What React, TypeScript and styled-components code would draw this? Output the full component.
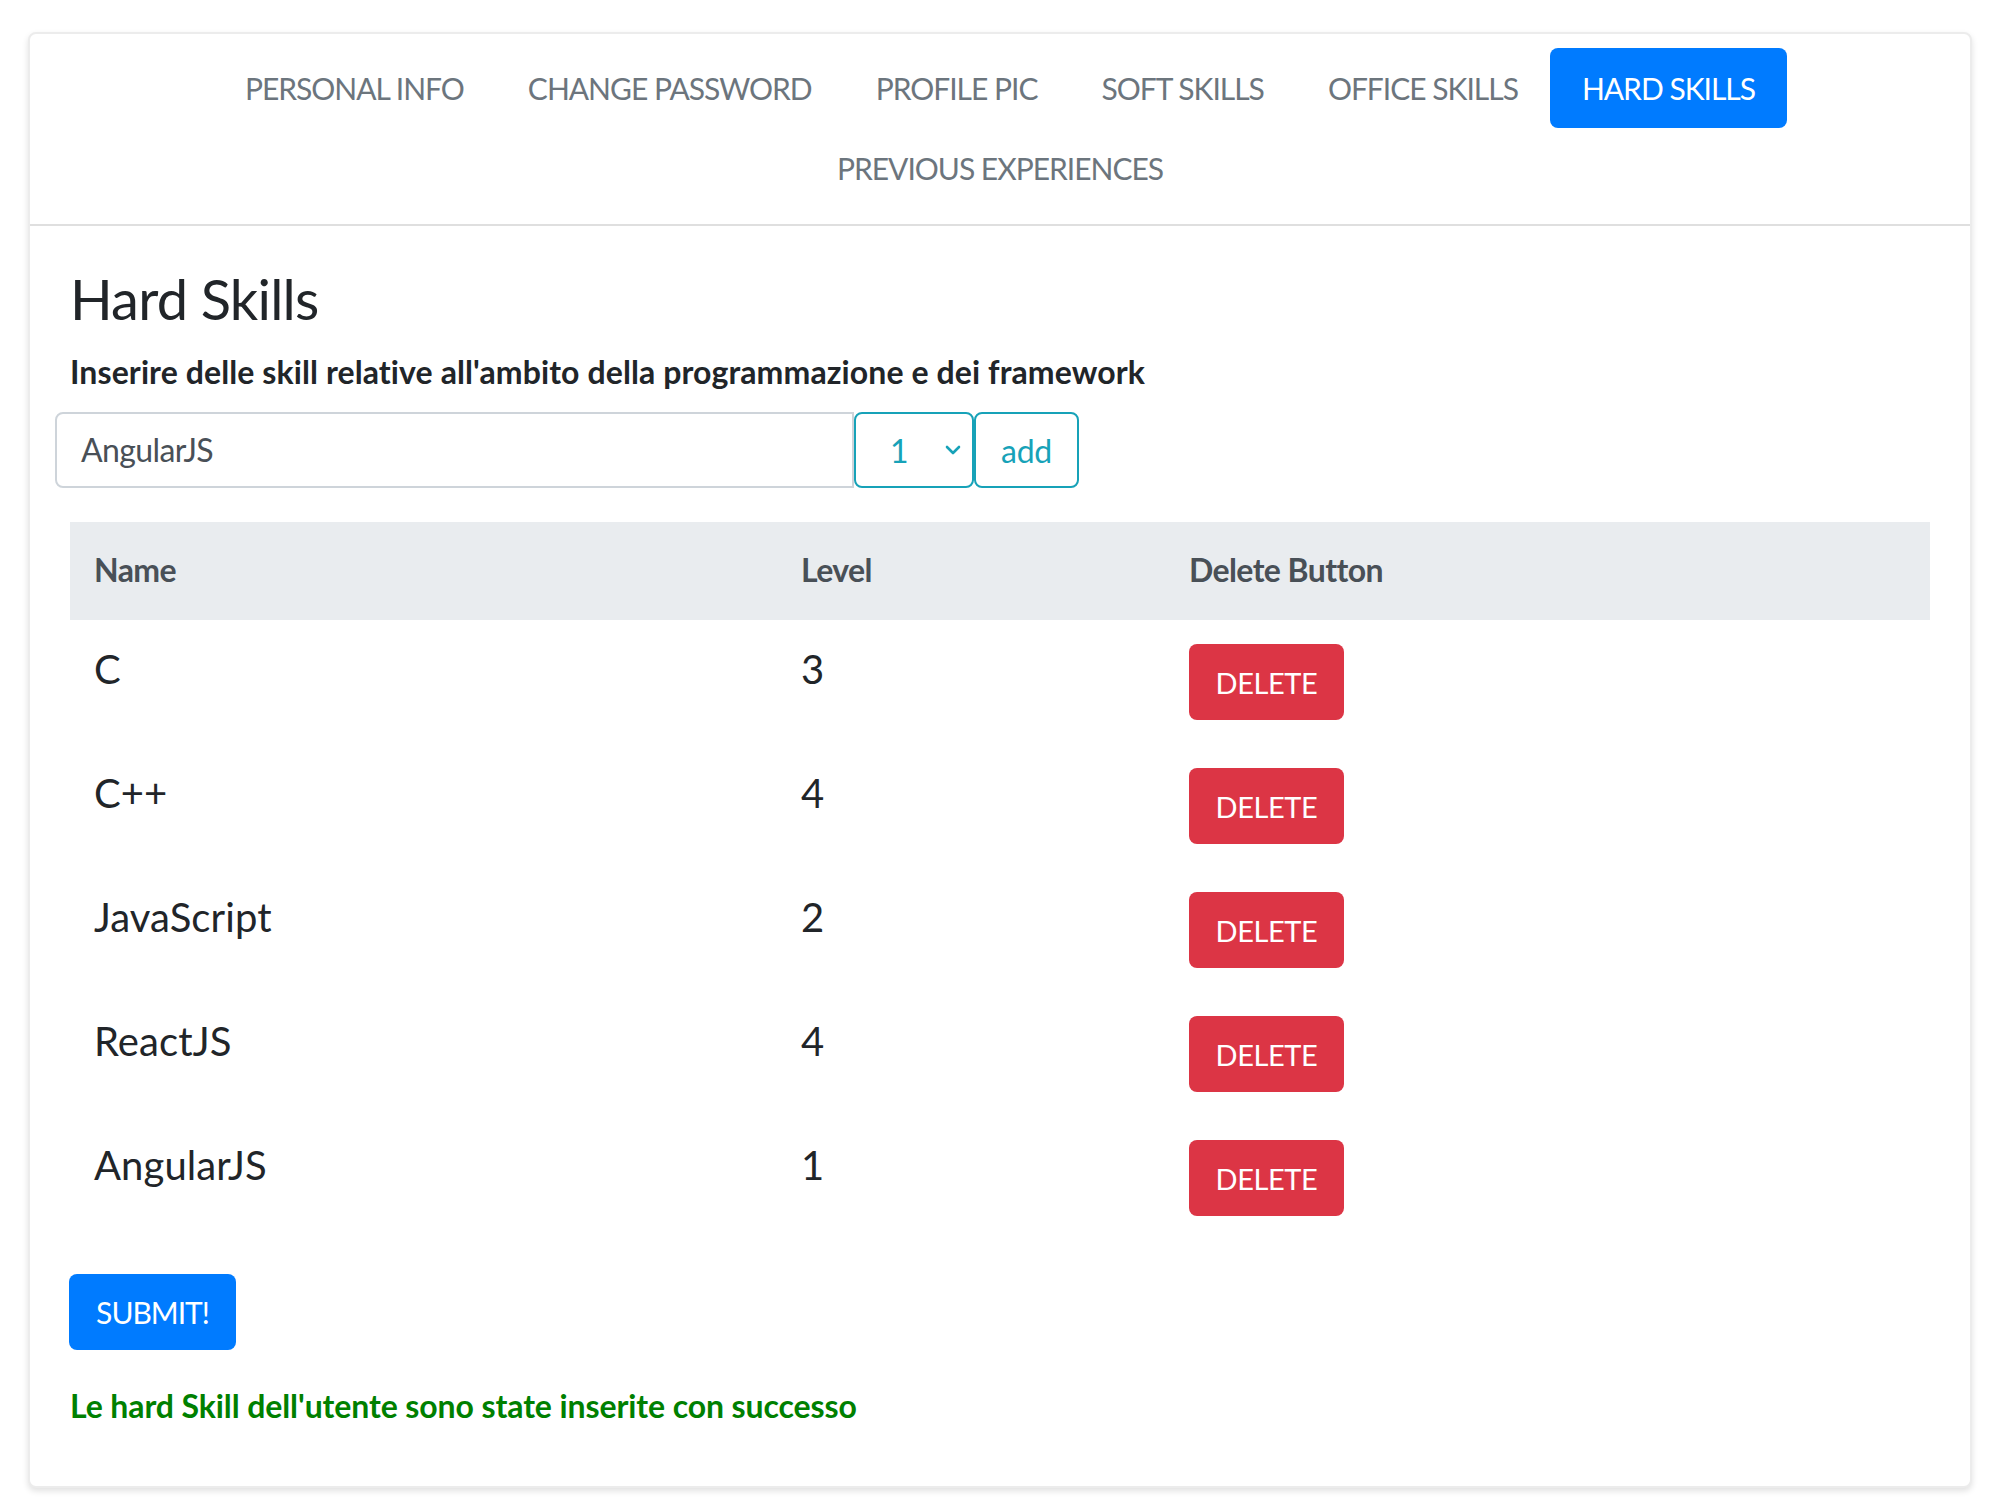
import React from "react";
import styled, { createGlobalStyle } from "styled-components";

const Global = createGlobalStyle`
  html, body { margin: 0; padding: 0; background: #ffffff; }
  body { font-family: "Lato", "Noto Sans", sans-serif; color: #212529; }
  * { box-sizing: border-box; }
`;

const Page = styled.div`
  padding: 32px 22px 18px 28px;
`;

const Card = styled.div`
  width: 1944px;
  background: #fff;
  border: 2px solid #ececec;
  border-radius: 8px;
  box-shadow: 0 3px 6px rgba(0, 0, 0, 0.12);
`;

const Header = styled.div`
  padding: 14px 40px 16px;
  border-bottom: 2px solid #dfdfdf;
`;

const Nav = styled.nav`
  display: flex;
  flex-wrap: wrap;
  justify-content: center;
  max-width: 1660px;
  margin: 0 auto;
`;

const NavLink = styled.a<{ $active?: boolean }>`
  display: block;
  height: 80px;
  line-height: 80px;
  padding: 0 32px;
  font-size: 30px;
  letter-spacing: -1px;
  text-transform: uppercase;
  border-radius: 8px;
  color: ${(p) => (p.$active ? "#ffffff" : "#6c757d")};
  background: ${(p) => (p.$active ? "#007bff" : "transparent")};
  cursor: pointer;
`;

const Body = styled.div`
  padding: 40px 40px 40px;
`;

const Title = styled.h3`
  margin: 0 0 16px;
  font-size: 56px;
  font-weight: 400;
  line-height: 66px;
  letter-spacing: -0.8px;
  color: #212529;
`;

const Lead = styled.p`
  margin: 0 0 16px;
  font-size: 32px;
  font-weight: 700;
  line-height: 48px;
  letter-spacing: 0.1px;
  color: #212529;
`;

const InputGroup = styled.div`
  display: flex;
  margin-left: -15px;
  height: 76px;
  margin-bottom: 34px;
`;

const TextInput = styled.div`
  width: 799px;
  height: 76px;
  border: 2px solid #ced4da;
  border-radius: 8px 0 0 8px;
  padding: 0 24px;
  font-size: 32px;
  line-height: 72px;
  color: #495057;
  letter-spacing: -0.6px;
`;

const Select = styled.div`
  width: 120px;
  height: 76px;
  border: 2px solid #17a2b8;
  border-radius: 8px;
  display: flex;
  align-items: center;
  padding: 0 10px 0 34px;
  justify-content: space-between;
  font-size: 32px;
  color: #17a2b8;
`;

const AddButton = styled.button`
  width: 105px;
  height: 76px;
  border: 2px solid #17a2b8;
  border-radius: 8px;
  background: #fff;
  color: #17a2b8;
  font-family: inherit;
  font-size: 32px;
  letter-spacing: -0.3px;
  padding: 0;
`;

const Table = styled.table`
  width: 100%;
  border-collapse: collapse;
  margin-bottom: 34px;
`;

const Th = styled.th<{ $w?: number }>`
  background: #e9ecef;
  color: #495057;
  text-align: left;
  font-size: 32px;
  font-weight: 700;
  letter-spacing: -0.6px;
  line-height: 48px;
  padding: 24px;
  border-bottom: 2px solid #e9ecef;
  width: ${(p) => (p.$w ? `${p.$w}px` : "auto")};
`;

const Td = styled.td`
  vertical-align: top;
  font-size: 40px;
  line-height: 50px;
  letter-spacing: 0.1px;
  padding: 24px;
  height: 124px;
  color: #212529;
`;

const DangerButton = styled.button`
  height: 76px;
  width: 155px;
  padding: 0;
  border: none;
  border-radius: 8px;
  background: #dc3545;
  color: #fff;
  font-family: inherit;
  font-size: 29px;
  letter-spacing: -0.4px;
`;

const SubmitButton = styled.button`
  display: block;
  width: 167px;
  height: 76px;
  padding: 0;
  border: none;
  border-radius: 8px;
  background: #007bff;
  color: #fff;
  font-family: inherit;
  font-size: 30px;
  letter-spacing: -1px;
  margin: 0 0 32px -1px;
`;

const Success = styled.p`
  margin: 0 0 16px;
  font-size: 32px;
  font-weight: 700;
  line-height: 48px;
  letter-spacing: -0.1px;
  color: #008000;
`;

const tabs = [
  "Personal Info",
  "Change Password",
  "Profile Pic",
  "Soft Skills",
  "Office Skills",
  "Hard Skills",
  "Previous Experiences",
];

const skills: [string, number][] = [
  ["C", 3],
  ["C++", 4],
  ["JavaScript", 2],
  ["ReactJS", 4],
  ["AngularJS", 1],
];

export default function App() {
  return (
    <>
      <Global />
      <Page>
        <Card>
          <Header>
            <Nav>
              {tabs.map((t) => (
                <NavLink key={t} $active={t === "Hard Skills"}>
                  {t}
                </NavLink>
              ))}
            </Nav>
          </Header>
          <Body>
            <Title>Hard Skills</Title>
            <Lead>Inserire delle skill relative all'ambito della programmazione e dei framework</Lead>
            <InputGroup>
              <TextInput>AngularJS</TextInput>
              <Select>
                <span>1</span>
                <svg width="18" height="12" viewBox="0 0 18 12">
                  <path d="M3 3 L9 9 L15 3" fill="none" stroke="#17a2b8" strokeWidth="2.6" strokeLinecap="round" strokeLinejoin="round" />
                </svg>
              </Select>
              <AddButton>add</AddButton>
            </InputGroup>
            <Table>
              <thead>
                <tr>
                  <Th $w={707}>Name</Th>
                  <Th $w={388}>Level</Th>
                  <Th>Delete Button</Th>
                </tr>
              </thead>
              <tbody>
                {skills.map(([name, level]) => (
                  <tr key={name}>
                    <Td>{name}</Td>
                    <Td>{level}</Td>
                    <Td>
                      <DangerButton>DELETE</DangerButton>
                    </Td>
                  </tr>
                ))}
              </tbody>
            </Table>
            <SubmitButton>SUBMIT!</SubmitButton>
            <Success>Le hard Skill dell'utente sono state inserite con successo</Success>
          </Body>
        </Card>
      </Page>
    </>
  );
}
